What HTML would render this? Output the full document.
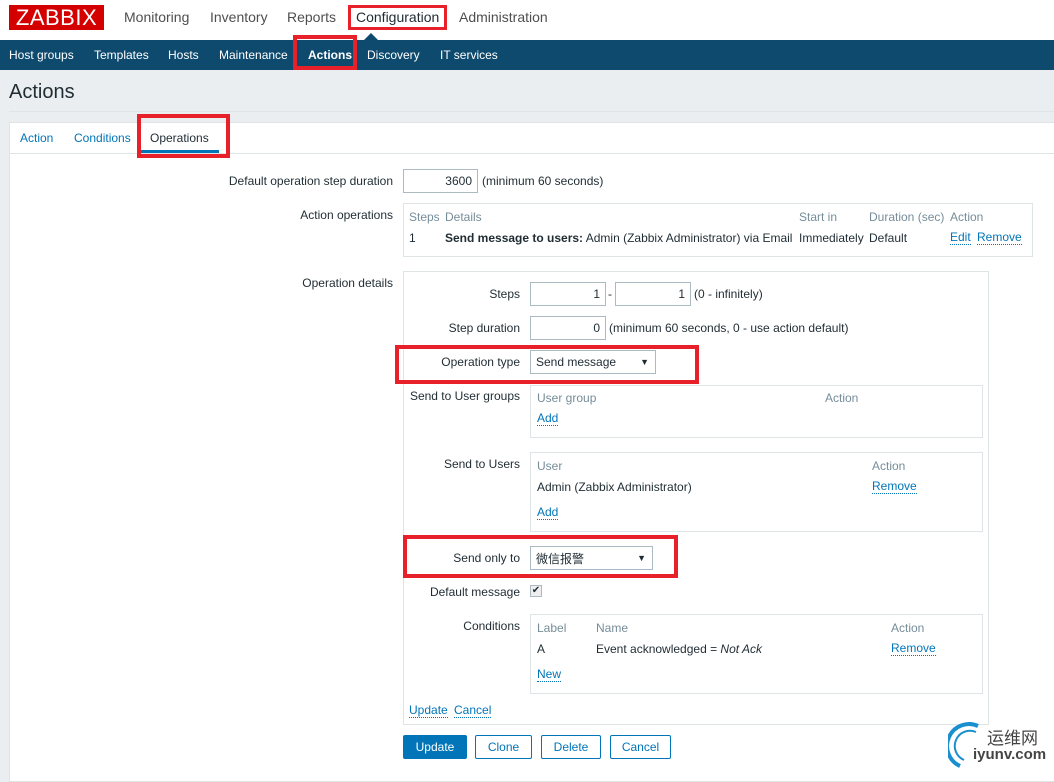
<!DOCTYPE html>
<html><head><meta charset="utf-8"><style>
*{margin:0;padding:0;box-sizing:border-box}
body{width:1054px;height:770px;overflow:hidden;background:#ebeef0;font-family:"Liberation Sans","Noto Sans CJK SC",sans-serif;font-size:12px;color:#1f2c33;position:relative}
.a{position:absolute;white-space:nowrap}
.r{text-align:right}
.lnk{color:#0275b8;border-bottom:1px dotted #0275b8;line-height:13px}
.g{color:#768d99}
.box{position:absolute;border:1px solid #dfe4e7;background:#fff}
.inp{position:absolute;border:1px solid #acbbc2;background:#fff;height:24px;text-align:right;padding:4px 5px;font-size:12px}
.red{position:absolute;border:4px solid #e8202a}
.btn{position:absolute;border:1px solid #0275b8;border-radius:2px;height:24px;color:#0275b8;text-align:center;line-height:22px;font-size:12px;background:#fff}
</style></head><body>
<div class="a" style="left:0;top:0;width:1054px;height:40px;background:#fff"></div>
<div class="a" style="left:9px;top:5px;width:95px;height:25px;background:#d40000;color:#fff;font-size:22px;line-height:25px;text-align:center;letter-spacing:0.5px">ZABBIX</div>
<div class="a" style="left:124px;top:9px;font-size:14px;color:#4f4f4f">Monitoring</div>
<div class="a" style="left:210px;top:9px;font-size:14px;color:#4f4f4f">Inventory</div>
<div class="a" style="left:287px;top:9px;font-size:14px;color:#4f4f4f">Reports</div>
<div class="a" style="left:356px;top:9px;font-size:14px;color:#1f2c33">Configuration</div>
<div class="a" style="left:459px;top:9px;font-size:14px;color:#4f4f4f">Administration</div>
<div class="red" style="left:348px;top:5px;width:99px;height:25px;border-width:3px"></div>
<div class="a" style="left:0;top:40px;width:1054px;height:30px;background:#0e4a6d"></div>
<div class="a" style="left:364px;top:33px;width:0;height:0;border-left:7px solid transparent;border-right:7px solid transparent;border-bottom:7px solid #0e4a6d"></div>
<div class="a" style="left:9px;top:48px;color:#fff">Host groups</div>
<div class="a" style="left:94px;top:48px;color:#fff">Templates</div>
<div class="a" style="left:168px;top:48px;color:#fff">Hosts</div>
<div class="a" style="left:219px;top:48px;color:#fff">Maintenance</div>
<div class="a" style="left:308px;top:48px;color:#fff;font-weight:bold">Actions</div>
<div class="a" style="left:367px;top:48px;color:#fff">Discovery</div>
<div class="a" style="left:440px;top:48px;color:#fff">IT services</div>
<div class="red" style="left:293px;top:35px;width:64px;height:35px"></div>
<div class="a" style="left:9px;top:81px;font-size:20px;color:#1f2c33">Actions</div>
<div class="a" style="left:9px;top:111px;width:1045px;height:1px;background:#dfe4e7"></div>
<div class="a" style="left:9px;top:122px;width:1050px;height:660px;background:#fff;border:1px solid #dfe4e7"></div>
<div class="a" style="left:10px;top:153px;width:1044px;height:1px;background:#dfe4e7"></div>
<div class="a" style="left:20px;top:131px;color:#0275b8">Action</div>
<div class="a" style="left:74px;top:131px;color:#0275b8">Conditions</div>
<div class="a" style="left:150px;top:131px">Operations</div>
<div class="a" style="left:141px;top:150px;width:78px;height:3px;background:#0275b8"></div>
<div class="red" style="left:137px;top:114px;width:93px;height:44px"></div>

<div class="a r" style="right:661px;top:174px">Default operation step duration</div>
<div class="inp" style="left:403px;top:169px;width:75px">3600</div>
<div class="a" style="left:482px;top:174px">(minimum 60 seconds)</div>
<div class="a r" style="right:661px;top:208px">Action operations</div>
<div class="box" style="left:403px;top:203px;width:630px;height:54px"></div>
<div class="a g" style="left:409px;top:210px">Steps</div>
<div class="a g" style="left:445px;top:210px">Details</div>
<div class="a g" style="left:799px;top:210px">Start in</div>
<div class="a g" style="left:869px;top:210px">Duration (sec)</div>
<div class="a g" style="left:950px;top:210px">Action</div>
<div class="a" style="left:409px;top:231px">1</div>
<div class="a" style="left:445px;top:231px"><b>Send message to users:</b> Admin (Zabbix Administrator) via Email</div>
<div class="a" style="left:799px;top:231px">Immediately</div>
<div class="a" style="left:869px;top:231px">Default</div>
<div class="a lnk" style="left:950px;top:231px">Edit</div>
<div class="a lnk" style="left:977px;top:231px">Remove</div>

<div class="a r" style="right:661px;top:276px">Operation details</div>
<div class="box" style="left:403px;top:271px;width:586px;height:454px"></div>
<div class="a r" style="right:534px;top:287px">Steps</div>
<div class="inp" style="left:530px;top:282px;width:76px">1</div>
<div class="a" style="left:608px;top:287px">-</div>
<div class="inp" style="left:615px;top:282px;width:76px">1</div>
<div class="a" style="left:694px;top:287px">(0 - infinitely)</div>
<div class="a r" style="right:534px;top:321px">Step duration</div>
<div class="inp" style="left:530px;top:316px;width:76px">0</div>
<div class="a" style="left:609px;top:321px">(minimum 60 seconds, 0 - use action default)</div>
<div class="a r" style="right:534px;top:355px">Operation type</div>
<div class="inp" style="left:530px;top:350px;width:126px;text-align:left">Send message<span style="position:absolute;right:6px;font-size:9px;top:6px">▼</span></div>
<div class="red" style="left:395px;top:345px;width:304px;height:39px"></div>
<div class="a r" style="right:534px;top:389px">Send to User groups</div>
<div class="box" style="left:530px;top:385px;width:453px;height:53px"></div>
<div class="a g" style="left:537px;top:391px">User group</div>
<div class="a g" style="left:825px;top:391px">Action</div>
<div class="a lnk" style="left:537px;top:412px">Add</div>
<div class="a r" style="right:534px;top:457px">Send to Users</div>
<div class="box" style="left:530px;top:452px;width:453px;height:80px"></div>
<div class="a g" style="left:537px;top:459px">User</div>
<div class="a g" style="left:872px;top:459px">Action</div>
<div class="a" style="left:537px;top:480px">Admin (Zabbix Administrator)</div>
<div class="a lnk" style="left:872px;top:480px">Remove</div>
<div class="a lnk" style="left:537px;top:506px">Add</div>
<div class="a r" style="right:534px;top:551px">Send only to</div>
<div class="inp" style="left:530px;top:546px;width:123px;text-align:left;padding-top:3px">微信报警<span style="position:absolute;right:6px;font-size:9px;top:6px">▼</span></div>
<div class="red" style="left:403px;top:535px;width:275px;height:43px"></div>
<div class="a r" style="right:534px;top:585px">Default message</div>
<div class="a" style="left:530px;top:585px;width:12px;height:12px;border:1px solid #acbbc2;background:#eee;font-size:10px;line-height:10px;text-align:center">✔</div>
<div class="a r" style="right:534px;top:619px">Conditions</div>
<div class="box" style="left:530px;top:614px;width:453px;height:80px"></div>
<div class="a g" style="left:537px;top:621px">Label</div>
<div class="a g" style="left:596px;top:621px">Name</div>
<div class="a g" style="left:891px;top:621px">Action</div>
<div class="a" style="left:537px;top:642px">A</div>
<div class="a" style="left:596px;top:642px">Event acknowledged = <i>Not Ack</i></div>
<div class="a lnk" style="left:891px;top:642px">Remove</div>
<div class="a lnk" style="left:537px;top:668px">New</div>
<div class="a lnk" style="left:409px;top:704px">Update</div>
<div class="a lnk" style="left:454px;top:704px">Cancel</div>

<div class="btn" style="left:403px;top:735px;width:64px;background:#0275b8;color:#fff">Update</div>
<div class="btn" style="left:475px;top:735px;width:57px">Clone</div>
<div class="btn" style="left:541px;top:735px;width:60px">Delete</div>
<div class="btn" style="left:610px;top:735px;width:61px">Cancel</div>

<svg class="a" style="left:948px;top:722px" width="40" height="48"><path d="M30 4 A20 20 0 0 0 12 44" stroke="#1a8fd0" stroke-width="4" fill="none"/><path d="M28 10 A14 14 0 0 0 16 38" stroke="#1a8fd0" stroke-width="2" fill="none"/></svg>
<div class="a" style="left:987px;top:724px;font-size:17px;color:#444">运维网</div>
<div class="a" style="left:973px;top:746px;font-size:15px;font-weight:bold;color:#444">iyunv.com</div>
</body></html>
